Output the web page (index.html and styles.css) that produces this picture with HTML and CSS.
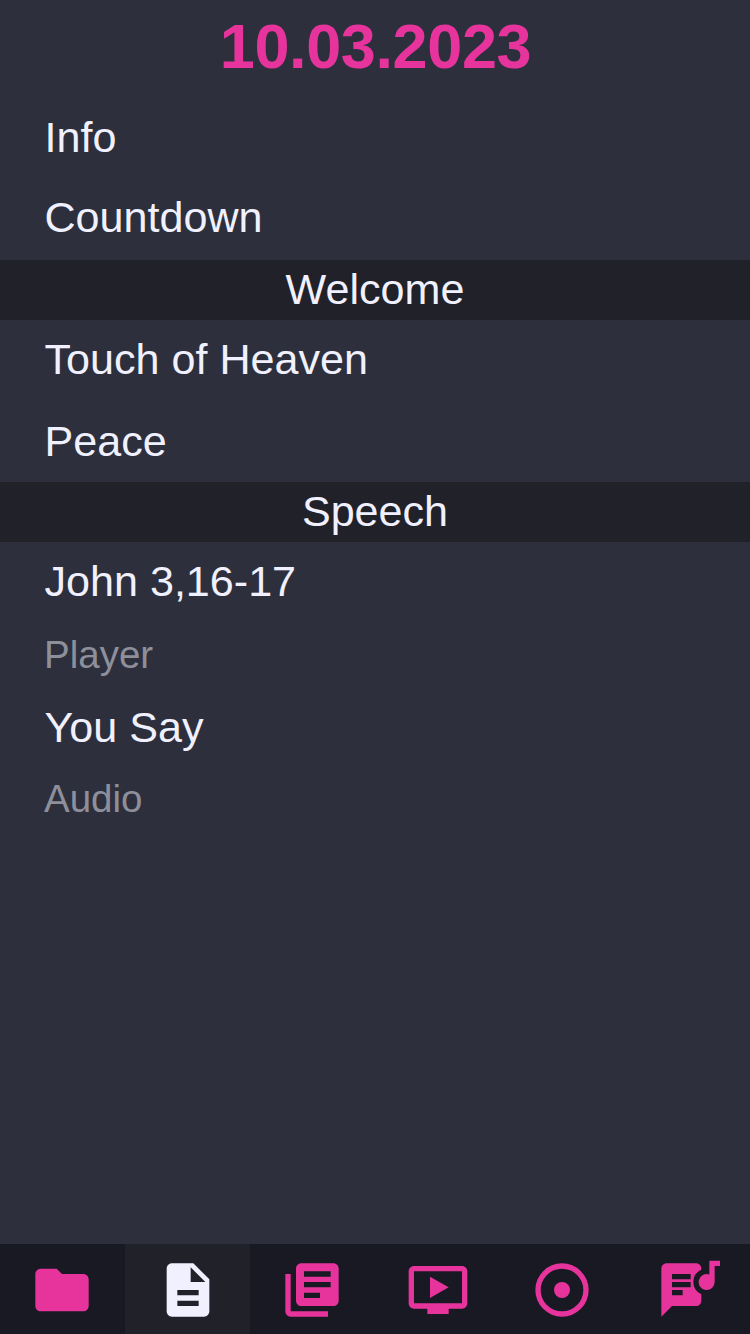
FILE: index.html
```html
<!DOCTYPE html>
<html lang="en">
<head>
<meta charset="utf-8">
<title>10.03.2023</title>
<link rel="stylesheet" href="styles.css">
</head>
<body>
<div class="app">
  <h1 class="title">10.03.2023</h1>
  <main class="show-list">
    <div class="group group-first">
      <div class="item">Info</div>
      <div class="item">Countdown</div>
    </div>
    <h2 class="section">Welcome</h2>
    <div class="group group-welcome">
      <div class="item">Touch of Heaven</div>
      <div class="item">Peace</div>
    </div>
    <h2 class="section">Speech</h2>
    <div class="group">
      <div class="item">John 3,16-17</div>
      <div class="item item-muted">Player</div>
      <div class="item item-compact">You Say</div>
      <div class="item item-muted">Audio</div>
    </div>
  </main>
  <nav class="tabs">
    <a class="tab"><svg class="icon" viewBox="0 0 24 24"><path d="M10 4H4c-1.1 0-2 .9-2 2v12c0 1.1.9 2 2 2h16c1.1 0 2-.9 2-2V8c0-1.1-.9-2-2-2h-8z"/></svg></a>
    <a class="tab tab-active"><svg class="icon" viewBox="0 0 24 24"><path d="M14 2H6c-1.1 0-2 .9-2 2v16c0 1.1.9 2 2 2h12c1.1 0 2-.9 2-2V8zm2 16H8v-2h8zm0-4H8v-2h8zm-3-5V3.500L18.500 9z"/></svg></a>
    <a class="tab"><svg class="icon" viewBox="0 0 24 24"><path d="M4 6H2v14c0 1.100.9 2 2 2h14v-2H4zM20 2H8c-1.100 0-2 .9-2 2v12c0 1.100.9 2 2 2h12c1.100 0 2-.9 2-2V4c0-1.100-.9-2-2-2zm-1 5H9V5h10zm0 4H9V9h10zm-4 4H9v-2h6z"/></svg></a>
    <a class="tab"><svg class="icon" viewBox="0 0 24 24"><path d="M21 3H3c-1.100 0-2 .9-2 2v12c0 1.100.9 2 2 2h5v2h8v-2h5c1.100 0 2-.9 2-2V5c0-1.100-.9-2-2-2zm0 14H3V5h18zM9 7v8l7-4z"/></svg></a>
    <a class="tab"><svg class="icon" viewBox="0 0 24 24"><path d="M12 2a10 10 0 1 0 0 20 10 10 0 0 0 0-20zm0 18a8 8 0 1 1 0-16 8 8 0 0 1 0 16z"/><circle cx="12" cy="12" r="3"/></svg></a>
    <a class="tab"><svg class="icon" viewBox="0 0 24 24"><path d="M14 9a5 5 0 0 1 3-4.580V4c0-1.100-.9-2-2-2H4c-1.100 0-2 .9-2 2v18l4-4h9c1.100 0 2-.9 2-2v-2.420A5 5 0 0 1 14 9zm-4 5H6v-2h4zm3-3H6V9h7zm0-3H6V6h7zM20 6.180A3 3 0 1 0 22 9V3h2V1h-4z"/></svg></a>
  </nav>
</div>
</body>
</html>
```
FILE: styles.css
```css
* {
  box-sizing: border-box;
}

body {
  margin: 0;
  background: #2d303c;
  color: #f0f0ff;
  font-family: "Liberation Sans", Arial, sans-serif;
}

.app {
  display: flex;
  flex-direction: column;
  height: 1334px;
  overflow: hidden;
}

.title {
  margin: 0;
  padding-left: 1px;
  height: 98px;
  color: #e6349c;
  font-size: 63px;
  letter-spacing: -0.4px;
  line-height: 93px;
  text-align: center;
}

.show-list {
  flex: 1;
}

.group {
  display: flex;
  flex-direction: column;
}

.group-first {
  gap: 2px;
  padding-bottom: 4px;
}

.group-welcome {
  gap: 4px;
  padding-bottom: 2px;
}

.item {
  padding-left: 44.500px;
  font-size: 43.100px;
  line-height: 78px;
}

.item-muted {
  padding-left: 44px;
  color: #8d8f9b;
  font-size: 38.500px;
  line-height: 70px;
}

.item-compact {
  line-height: 74px;
}

.section {
  margin: 0;
  height: 60px;
  background: #212129;
  font-size: 43.100px;
  font-weight: 400;
  line-height: 58px;
  text-align: center;
}

.tabs {
  display: grid;
  grid-template-columns: repeat(6, 1fr);
  height: 90px;
  background: #191923;
}

.tab {
  display: flex;
  align-items: center;
  justify-content: center;
  padding-top: 1px;
}

.tab:nth-child(odd) {
  padding-right: 1px;
}

.tab-active {
  background: #212129;
  color: #f0f0ff;
}

.icon {
  width: 64px;
  height: 64px;
  fill: #e6349c;
}

.tab-active .icon {
  fill: currentColor;
}
```
